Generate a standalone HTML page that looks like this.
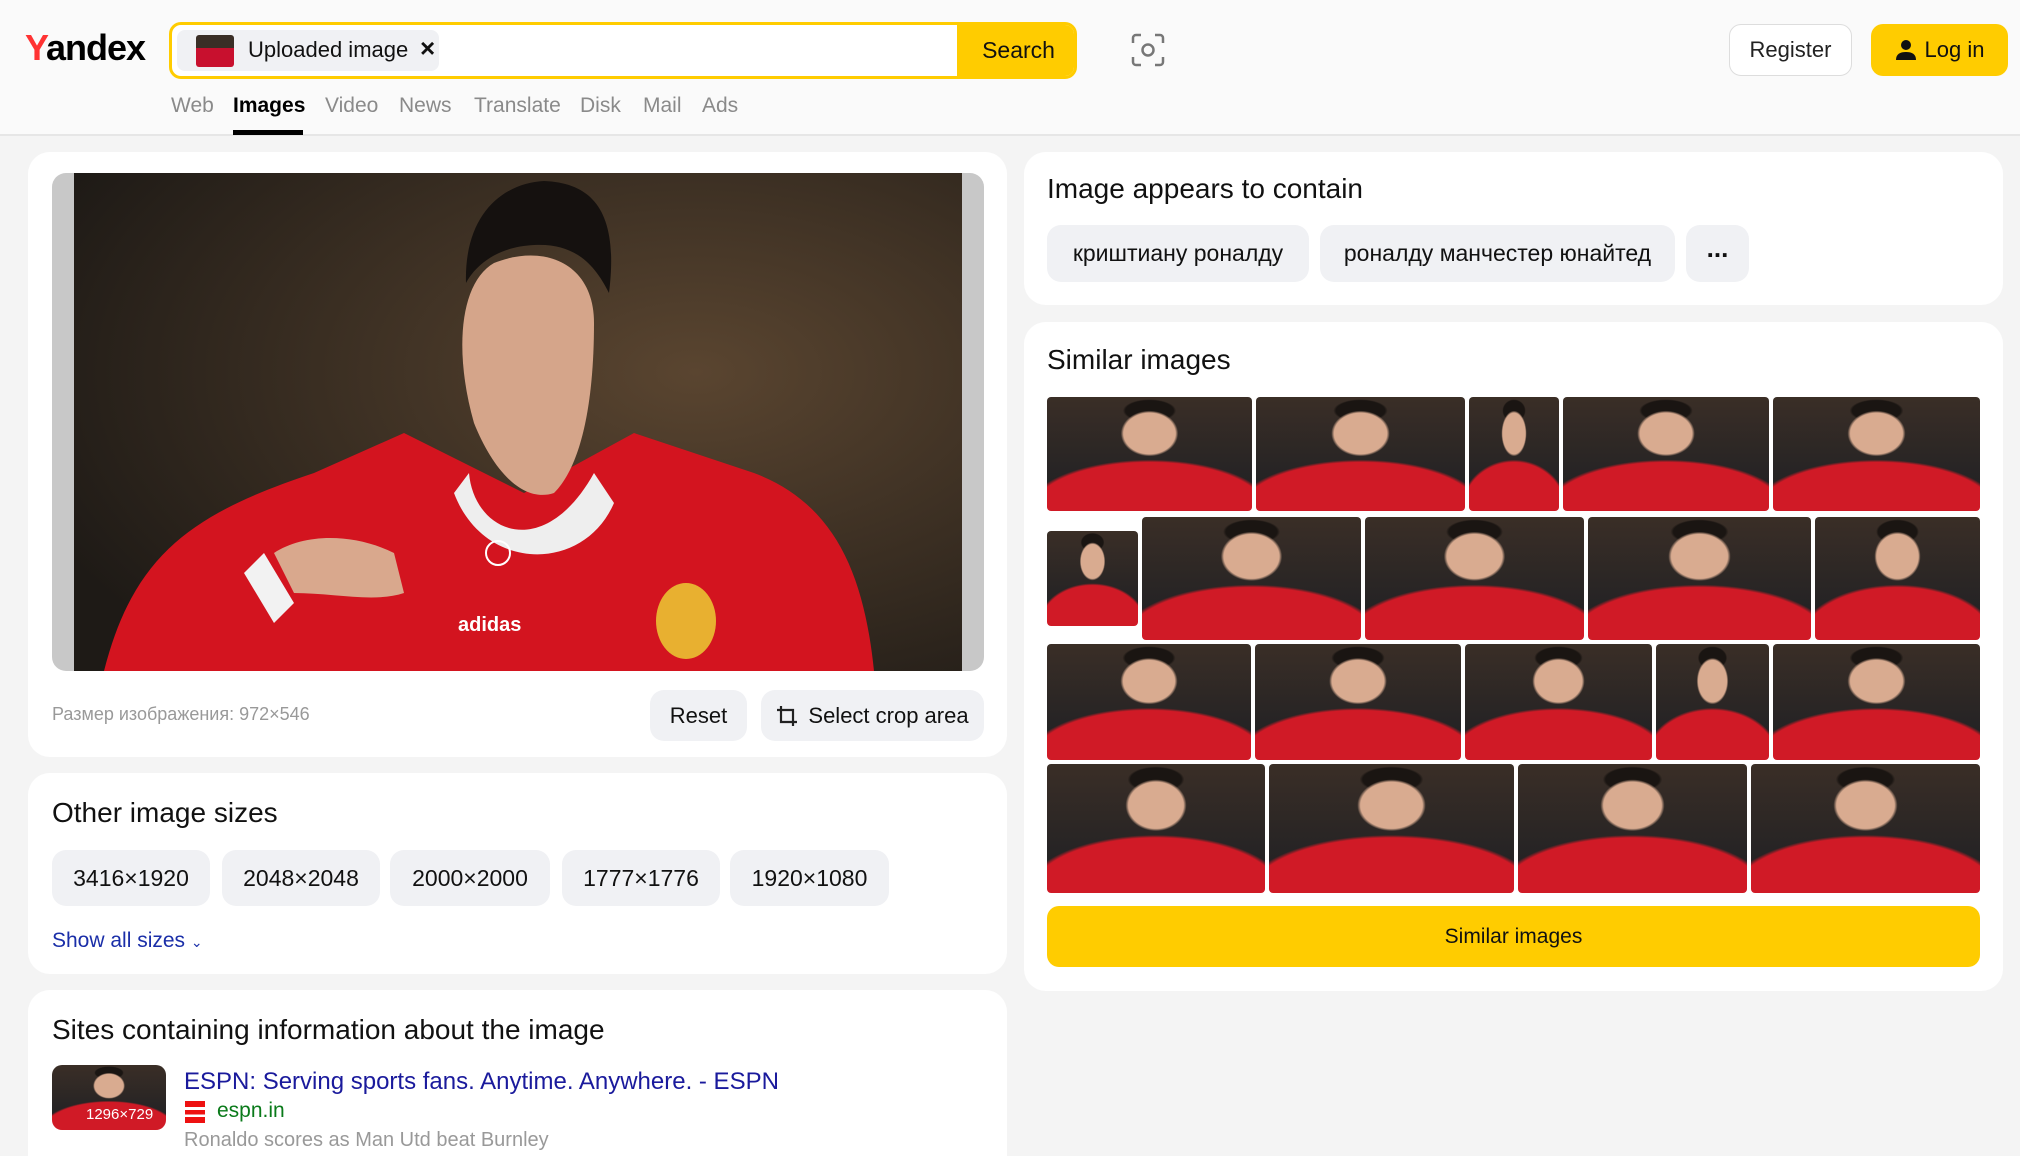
<!DOCTYPE html>
<html style="overflow:hidden;height:1156px"><head><meta charset="utf-8"><style>
*{box-sizing:border-box;margin:0;padding:0}
body{width:2020px;height:1156px;overflow:hidden;background:#f4f4f4;font-family:"Liberation Sans","Noto Sans CJK SC",sans-serif;color:#000;position:relative}
.abs{position:absolute}
.hdr{left:0;top:0;width:2020px;height:136px;background:#fafafa;border-bottom:2px solid #e6e6e6}
.card{position:absolute;background:#fff;border-radius:22px}
.chip{position:absolute;background:#f0f1f4;border-radius:14px;display:flex;align-items:center;justify-content:center;font-size:23px;color:#111}
.h2{position:absolute;font-size:28px;color:#111}
.nav{position:absolute;top:94px;font-size:21px;color:#8a8a8a}
.ph{border-radius:4px;background:
 radial-gradient(ellipse 14% 20% at 50% 32%,#d9ab90 0 90%,transparent 100%),
 radial-gradient(ellipse 13% 10% at 50% 12%,#1a1512 0 90%,transparent 100%),
 radial-gradient(ellipse 60% 45% at 50% 100%,#d01a26 0 95%,transparent 100%),
 linear-gradient(#3a2e26,#1d1f24)}
.row{position:absolute;left:1047px;width:933px;display:flex;gap:4px}
</style></head><body>
<div class="abs hdr"></div>
<div class="abs" style="left:25px;top:27px;font-size:36px;font-weight:bold;letter-spacing:-1px"><span style="color:#f33">Y</span>andex</div>
<div class="abs" style="left:169px;top:22px;width:908px;height:57px;border:3px solid #fc0;border-radius:12px;background:#fff;overflow:hidden">
 <div class="abs" style="left:5px;top:5px;width:262px;height:41px;background:#f0f1f4;border-radius:8px"></div>
 <div class="abs" style="left:24px;top:10px;width:38px;height:32px;border-radius:3px;background:linear-gradient(#3a2e26 40%,#c8102e 40%)"></div>
 <div class="abs" style="left:76px;top:12px;font-size:22px;color:#111">Uploaded image</div>
 <div class="abs" style="left:248px;top:8px;font-size:26px;font-weight:bold;color:#111">×</div>
 <div class="abs" style="left:785px;top:-3px;width:123px;height:57px;background:#fc0;display:flex;align-items:center;justify-content:center;font-size:23px;color:#111">Search</div>
</div>
<svg class="abs" style="left:1130px;top:32px" width="36" height="36" viewBox="0 0 36 36" fill="none" stroke="#777" stroke-width="2.5"><path d="M3 11V6a3 3 0 0 1 3-3h5M25 3h5a3 3 0 0 1 3 3v5M33 25v5a3 3 0 0 1-3 3h-5M11 33H6a3 3 0 0 1-3-3v-5"/><circle cx="18" cy="18" r="5.5"/></svg>
<div class="abs" style="left:1729px;top:24px;width:123px;height:52px;border:1px solid #ddd;border-radius:12px;background:#fff;display:flex;align-items:center;justify-content:center;font-size:22px;color:#222">Register</div>
<div class="abs" style="left:1871px;top:24px;width:137px;height:52px;border-radius:12px;background:#fc0;display:flex;align-items:center;justify-content:center;font-size:22px;color:#111"><svg width="22" height="22" viewBox="0 0 22 22" style="margin-right:8px"><circle cx="11" cy="6" r="5" fill="#111"/><path d="M1 21c0-6 4-8 10-8s10 2 10 8z" fill="#111"/></svg>Log in</div>
<div class="nav" style="left:171px">Web</div>
<div class="nav" style="left:233px;color:#000;font-weight:bold">Images</div>
<div class="abs" style="left:233px;top:130px;width:70px;height:5px;background:#000"></div>
<div class="nav" style="left:325px">Video</div>
<div class="nav" style="left:399px">News</div>
<div class="nav" style="left:474px">Translate</div>
<div class="nav" style="left:580px">Disk</div>
<div class="nav" style="left:643px">Mail</div>
<div class="nav" style="left:702px">Ads</div>

<div class="card" style="left:28px;top:152px;width:979px;height:605px"></div>
<div class="abs" style="left:52px;top:173px;width:932px;height:498px;background:#c8c8c8;border-radius:14px;overflow:hidden">
<svg class="abs" style="left:22px;top:0" width="888" height="498" viewBox="0 0 888 498">
<defs><radialGradient id="bg" cx="0.7" cy="0.4" r="0.8"><stop offset="0" stop-color="#5a4530"/><stop offset="1" stop-color="#1e1a16"/></radialGradient></defs>
<rect width="888" height="498" fill="url(#bg)"/>
<path d="M30 498 C60 380 120 340 240 300 L330 260 L450 320 L560 260 L680 300 C760 330 790 400 800 498Z" fill="#d3141f"/>
<path d="M400 250 C380 180 385 110 420 90 C470 70 520 90 520 150 C520 220 510 290 480 320 C450 330 420 300 400 250Z" fill="#d5a58a"/>
<path d="M392 110 C390 40 430 10 470 8 C520 10 545 40 535 120 C520 90 500 70 460 72 C420 74 400 95 392 110Z" fill="#15110f"/>
<path d="M395 300 C400 360 470 390 520 300 L540 330 C510 400 410 400 380 320Z" fill="#eee"/>
<path d="M200 380 C230 360 280 360 320 380 L330 420 C300 430 260 420 220 420Z" fill="#d9a88d"/>
<path d="M190 380 L220 430 L200 450 L170 400Z" fill="#f2f2f2"/>
<circle cx="424" cy="380" r="12" fill="none" stroke="#fff" stroke-width="2"/>
<text x="384" y="458" font-family="Liberation Sans" font-weight="bold" font-size="20" fill="#fff">adidas</text>
<ellipse cx="612" cy="448" rx="30" ry="38" fill="#e8b030"/>
</svg></div>
<div class="abs" style="left:52px;top:704px;font-size:18px;color:#999">Размер изображения: 972×546</div>
<div class="chip" style="left:650px;top:690px;width:97px;height:51px;font-size:22px">Reset</div>
<div class="chip" style="left:761px;top:690px;width:223px;height:51px;font-size:22px"><svg width="22" height="22" viewBox="0 0 22 22" fill="none" stroke="#222" stroke-width="2.2" style="margin-right:10px"><path d="M5 1v16h16M1 5h16v16"/></svg>Select crop area</div>

<div class="card" style="left:28px;top:773px;width:979px;height:201px"></div>
<div class="h2" style="left:52px;top:797px">Other image sizes</div>
<div class="chip" style="left:52px;top:850px;width:158px;height:56px">3416×1920</div>
<div class="chip" style="left:222px;top:850px;width:158px;height:56px">2048×2048</div>
<div class="chip" style="left:390px;top:850px;width:160px;height:56px">2000×2000</div>
<div class="chip" style="left:562px;top:850px;width:158px;height:56px">1777×1776</div>
<div class="chip" style="left:730px;top:850px;width:159px;height:56px">1920×1080</div>
<div class="abs" style="left:52px;top:929px;font-size:21px;color:#1a2ea8">Show all sizes <span style="font-size:14px">&#8964;</span></div>

<div class="card" style="left:28px;top:990px;width:979px;height:166px;border-radius:22px 22px 0 0"></div>
<div class="h2" style="left:52px;top:1014px">Sites containing information about the image</div>
<div class="abs ph" style="left:52px;top:1065px;width:114px;height:65px;border-radius:10px"></div>
<div class="abs" style="left:86px;top:1106px;font-size:15px;color:#fff">1296×729</div>
<div class="abs" style="left:184px;top:1068px;font-size:24px;color:#1a1a9c">ESPN: Serving sports fans. Anytime. Anywhere. - ESPN</div>
<div class="abs" style="left:185px;top:1101px;width:20px;height:22px;background:linear-gradient(#e11 0 28%,transparent 28% 40%,#e11 40% 62%,transparent 62% 72%,#e11 72%)"></div>
<div class="abs" style="left:217px;top:1099px;font-size:21px;color:#0a7a1a">espn.in</div>
<div class="abs" style="left:184px;top:1129px;font-size:20px;color:#999">Ronaldo scores as Man Utd beat Burnley</div>

<div class="card" style="left:1024px;top:152px;width:979px;height:153px"></div>
<div class="h2" style="left:1047px;top:173px">Image appears to contain</div>
<div class="chip" style="left:1047px;top:225px;width:262px;height:57px">криштиану роналду</div>
<div class="chip" style="left:1320px;top:225px;width:355px;height:57px">роналду манчестер юнайтед</div>
<div class="chip" style="left:1686px;top:225px;width:63px;height:57px;font-weight:bold;font-size:26px;padding-bottom:10px">...</div>

<div class="card" style="left:1024px;top:322px;width:979px;height:669px"></div>
<div class="h2" style="left:1047px;top:344px">Similar images</div>
<div class="row" style="top:397px;height:114px"><div class="ph" style="flex:205"></div><div class="ph" style="flex:209"></div><div class="ph" style="flex:91"></div><div class="ph" style="flex:206"></div><div class="ph" style="flex:207"></div></div>
<div class="row" style="top:517px;height:123px"><div class="ph" style="flex:91;margin-top:14px;height:95px"></div><div class="ph" style="flex:219"></div><div class="ph" style="flex:219"></div><div class="ph" style="flex:223"></div><div class="ph" style="flex:165"></div></div>
<div class="row" style="top:644px;height:116px"><div class="ph" style="flex:204"></div><div class="ph" style="flex:206"></div><div class="ph" style="flex:187"></div><div class="ph" style="flex:113"></div><div class="ph" style="flex:207"></div></div>
<div class="row" style="top:764px;height:129px"><div class="ph" style="flex:218"></div><div class="ph" style="flex:245"></div><div class="ph" style="flex:229"></div><div class="ph" style="flex:229"></div></div>
<div class="abs" style="left:1047px;top:906px;width:933px;height:61px;background:#fc0;border-radius:12px;display:flex;align-items:center;justify-content:center;font-size:21px;color:#111">Similar images</div>
</body></html>
